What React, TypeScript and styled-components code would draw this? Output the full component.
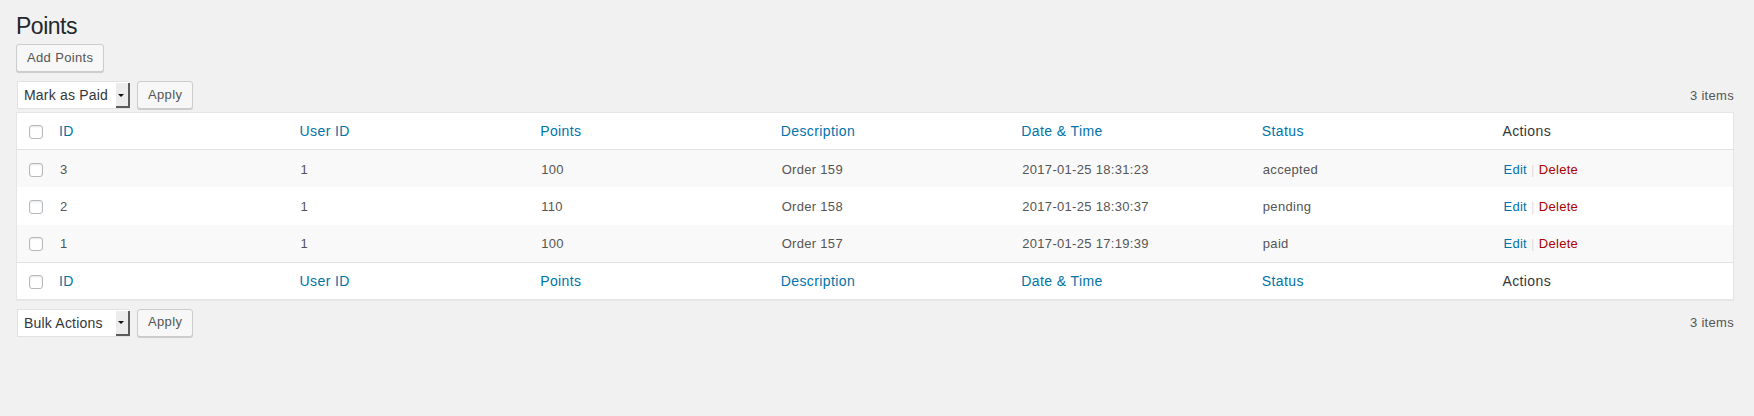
import React from "react";
import styled, { createGlobalStyle } from "styled-components";

const GlobalStyle = createGlobalStyle`
  html, body {
    margin: 0;
    padding: 0;
    background: #f1f1f1;
  }
  body {
    font-family: "Liberation Sans", Arial, sans-serif;
    font-size: 13px;
    color: #444;
  }
  * { box-sizing: border-box; }
`;

const Wrap = styled.div`
  padding: 12px 20px 40px 16px;
`;

const Title = styled.h1`
  margin: 0;
  font-size: 23px;
  line-height: 29px;
  font-weight: 400;
  color: #23282d;
  letter-spacing: -0.5px;
`;

const Button = styled.button`
  display: inline-flex;
  align-items: center;
  justify-content: center;
  height: 28px;
  padding: 0 10px 1px;
  margin: 0;
  background: #f7f7f7;
  border: 1px solid #ccc;
  border-radius: 3px;
  box-shadow: 0 1px 0 #ccc;
  color: #555;
  font-family: inherit;
  font-size: 13px;
  letter-spacing: 0.35px;
  line-height: 26px;
  cursor: pointer;
`;

const AddButton = styled(Button)`
  margin-top: 3px;
`;

const TableNav = styled.div<{ $top?: boolean }>`
  display: flex;
  align-items: center;
  justify-content: space-between;
  height: 28px;
  margin: ${(p) => (p.$top ? "9px 0 3px" : "9px 0 0")};
`;

const Actions = styled.div`
  display: flex;
  align-items: center;
  gap: 7px;
  padding-left: 1px;
`;

const SelectBox = styled.div`
  display: flex;
  align-items: stretch;
  width: 113px;
  height: 28px;
  background: #fff;
  border: 1px solid #e2e2e2;
  border-right: none;
  color: #32373c;
  font-size: 14px;
  letter-spacing: 0.2px;
`;

const SelectLabel = styled.span`
  flex: 1;
  display: flex;
  align-items: center;
  padding-left: 6px;
  white-space: nowrap;
  overflow: hidden;
`;

const SelectArrow = styled.span`
  width: 14px;
  display: flex;
  align-items: center;
  justify-content: center;
  padding-right: 2px;
  margin-top: 1px;
  background: #ececec;
  border-right: 2px solid #5b5b5b;
  border-bottom: 2px solid #5b5b5b;
  &::after {
    content: "";
    width: 0;
    height: 0;
    border-left: 3px solid transparent;
    border-right: 3px solid transparent;
    border-top: 3px solid #111;
    margin-top: 1px;
  }
`;

const Count = styled.span`
  color: #555;
  font-size: 13px;
  letter-spacing: 0.3px;
`;

const Table = styled.div`
  background: #fff;
  border: 1px solid #e5e5e5;
  box-shadow: 0 1px 1px rgba(0, 0, 0, 0.04);
`;

const Row = styled.div<{ $alt?: boolean; $kind?: "head" | "foot" | "body" }>`
  display: grid;
  grid-template-columns: 32px repeat(7, 1fr);
  align-items: center;
  height: ${(p) => (p.$kind === "body" ? "37.34px" : "36px")};
  background: ${(p) => (p.$alt ? "#f9f9f9" : "#fff")};
  border-bottom: ${(p) => (p.$kind === "head" ? "1px solid #e1e1e1" : "none")};
  border-top: ${(p) => (p.$kind === "foot" ? "1px solid #e1e1e1" : "none")};
  box-sizing: content-box;
`;

const CheckCell = styled.div`
  display: flex;
  align-items: center;
  padding-left: 12px;
  padding-top: 2px;
`;

const Checkbox = styled.span`
  display: block;
  width: 14px;
  height: 14px;
  border: 1px solid #b4b9be;
  border-radius: 3px;
  background: #fff;
  box-shadow: inset 0 1px 2px rgba(0, 0, 0, 0.1);
`;

const HeadCell = styled.div<{ $link?: boolean }>`
  padding-left: 10px;
  font-size: 14px;
  letter-spacing: 0.4px;
  color: ${(p) => (p.$link ? "#0073aa" : "#32373c")};
  white-space: nowrap;
`;

const Cell = styled.div`
  padding-left: 11px;
  padding-top: 1px;
  font-size: 13px;
  letter-spacing: 0.3px;
  color: #555;
  white-space: nowrap;
`;

const RowLink = styled.a<{ $danger?: boolean }>`
  color: ${(p) => (p.$danger ? "#a00" : "#0073aa")};
  text-decoration: none;
`;

const Sep = styled.span`
  color: #ddd;
  margin: 0 4px;
`;

const columns = ["ID", "User ID", "Points", "Description", "Date & Time", "Status"];

const rows = [
  { id: "3", user: "1", points: "100", desc: "Order 159", date: "2017-01-25 18:31:23", status: "accepted" },
  { id: "2", user: "1", points: "110", desc: "Order 158", date: "2017-01-25 18:30:37", status: "pending" },
  { id: "1", user: "1", points: "100", desc: "Order 157", date: "2017-01-25 17:19:39", status: "paid" },
];

function HeaderRow({ kind }: { kind: "head" | "foot" }) {
  return (
    <Row $kind={kind}>
      <CheckCell>
        <Checkbox />
      </CheckCell>
      {columns.map((c) => (
        <HeadCell key={c} $link>
          {c}
        </HeadCell>
      ))}
      <HeadCell>Actions</HeadCell>
    </Row>
  );
}

function Nav({ label, top }: { label: string; top?: boolean }) {
  return (
    <TableNav $top={top}>
      <Actions>
        <SelectBox>
          <SelectLabel>{label}</SelectLabel>
          <SelectArrow />
        </SelectBox>
        <Button>Apply</Button>
      </Actions>
      <Count>3 items</Count>
    </TableNav>
  );
}

export default function App() {
  return (
    <>
      <GlobalStyle />
      <Wrap>
        <Title>Points</Title>
        <AddButton>Add Points</AddButton>
        <Nav label="Mark as Paid" top />
        <Table>
          <HeaderRow kind="head" />
          {rows.map((r, i) => (
            <Row key={r.id} $kind="body" $alt={i % 2 === 0}>
              <CheckCell>
                <Checkbox />
              </CheckCell>
              <Cell>{r.id}</Cell>
              <Cell>{r.user}</Cell>
              <Cell>{r.points}</Cell>
              <Cell>{r.desc}</Cell>
              <Cell>{r.date}</Cell>
              <Cell>{r.status}</Cell>
              <Cell>
                <RowLink href="#">Edit</RowLink>
                <Sep>|</Sep>
                <RowLink href="#" $danger>
                  Delete
                </RowLink>
              </Cell>
            </Row>
          ))}
          <HeaderRow kind="foot" />
        </Table>
        <Nav label="Bulk Actions" />
      </Wrap>
    </>
  );
}
